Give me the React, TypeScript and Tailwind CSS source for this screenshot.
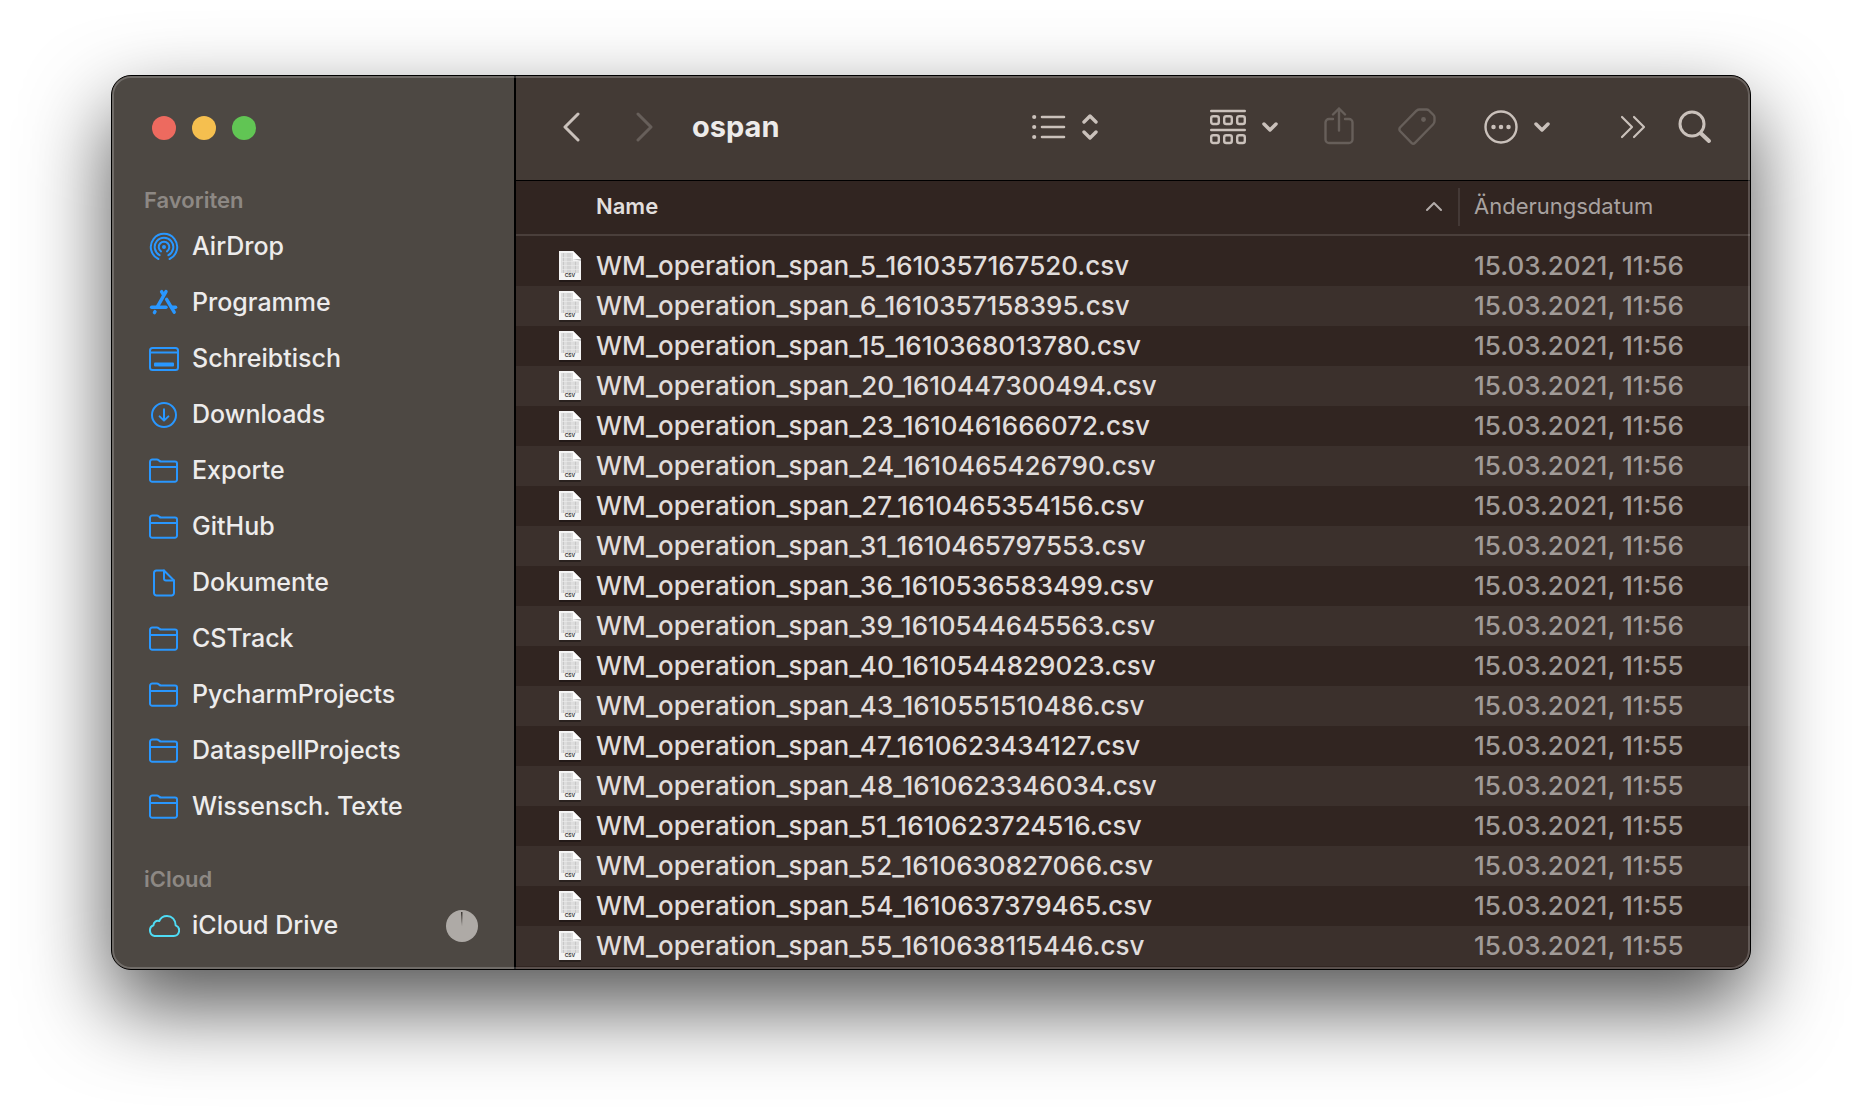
import React from 'react';

const files: [string, string][] = [
  ['WM_operation_span_5_1610357167520.csv', '15.03.2021, 11:56'],
  ['WM_operation_span_6_1610357158395.csv', '15.03.2021, 11:56'],
  ['WM_operation_span_15_1610368013780.csv', '15.03.2021, 11:56'],
  ['WM_operation_span_20_1610447300494.csv', '15.03.2021, 11:56'],
  ['WM_operation_span_23_1610461666072.csv', '15.03.2021, 11:56'],
  ['WM_operation_span_24_1610465426790.csv', '15.03.2021, 11:56'],
  ['WM_operation_span_27_1610465354156.csv', '15.03.2021, 11:56'],
  ['WM_operation_span_31_1610465797553.csv', '15.03.2021, 11:56'],
  ['WM_operation_span_36_1610536583499.csv', '15.03.2021, 11:56'],
  ['WM_operation_span_39_1610544645563.csv', '15.03.2021, 11:56'],
  ['WM_operation_span_40_1610544829023.csv', '15.03.2021, 11:55'],
  ['WM_operation_span_43_1610551510486.csv', '15.03.2021, 11:55'],
  ['WM_operation_span_47_1610623434127.csv', '15.03.2021, 11:55'],
  ['WM_operation_span_48_1610623346034.csv', '15.03.2021, 11:55'],
  ['WM_operation_span_51_1610623724516.csv', '15.03.2021, 11:55'],
  ['WM_operation_span_52_1610630827066.csv', '15.03.2021, 11:55'],
  ['WM_operation_span_54_1610637379465.csv', '15.03.2021, 11:55'],
  ['WM_operation_span_55_1610638115446.csv', '15.03.2021, 11:55'],
];

type SvgProps = { w: number; h: number; stroke?: number; children: React.ReactNode };

function Svg({ w, h, stroke = 2, children }: SvgProps) {
  return (
    <svg
      width={w}
      height={h}
      viewBox={`0 0 ${w} ${h}`}
      fill="none"
      stroke="currentColor"
      strokeWidth={stroke}
      strokeLinecap="round"
      strokeLinejoin="round"
      aria-hidden="true"
      className="shrink-0"
    >
      {children}
    </svg>
  );
}

const AirDropIcon = () => (
  <Svg w={32} h={32}>
    <circle cx="16" cy="16" r="2" fill="currentColor" stroke="none" />
    <path d="M13 20.4a5.300 5.300 0 1 1 6 0" />
    <path d="M11.600 24.200a9.300 9.300 0 1 1 8.800 0" />
    <path d="M10.400 28a13.200 13.200 0 1 1 11.200 0" />
  </Svg>
);

const AppsIcon = () => (
  <Svg w={32} h={32} stroke={3.4}>
    <path d="M18 4.600 9.600 19.400" />
    <path d="M13.600 4.600 15.400 7.600" />
    <path d="M18.600 12.400 26.200 25.200" />
    <path d="M3.600 20.200H18" />
    <path d="M23.600 20.200H27.600" />
    <path d="M7 24.600 6.400 25.600" />
  </Svg>
);

const DesktopIcon = () => (
  <Svg w={32} h={32}>
    <rect x="2" y="5" width="28" height="22" rx="2.5" />
    <path d="M2 9.600h28" />
    <rect x="6" y="19.5" width="20" height="4" rx="1" fill="currentColor" stroke="none" />
  </Svg>
);

const DownloadIcon = () => (
  <Svg w={32} h={32}>
    <circle cx="16" cy="16" r="12" />
    <path d="M16 10.200v11.200M11.600 17.400 16 21.600l4.400-4.200" />
  </Svg>
);

const FolderIcon = () => (
  <Svg w={32} h={32}>
    <path d="M2 24.600V7a2.400 2.400 0 0 1 2.400-2.400h4.400c1 0 1.500.3 2.200.9s1.200 1.100 2.200 1.100H27a2 2 0 0 1 2 2v16a2.200 2.200 0 0 1-2.200 2.200H4.200A2.200 2.200 0 0 1 2 24.600z" />
    <path d="M2 12h27" />
  </Svg>
);

const DocumentIcon = () => (
  <Svg w={32} h={32}>
    <path d="M6 26V6a2.500 2.500 0 0 1 2.500-2.500h7.500L26 13.500V26a2.500 2.500 0 0 1-2.500 2.500h-15A2.500 2.500 0 0 1 6 26z" />
    <path d="M16 3.500v8a2 2 0 0 0 2 2h8" />
  </Svg>
);

const CloudIcon = () => (
  <Svg w={32} h={32}>
    <path d="M6.500 26h19a5.500 5.500 0 0 0 2.200-10.600c0-5.400-3.700-9.400-8.700-9.400-3.500 0-6.500 2-7.800 5-3.200-.8-5.600 1.200-5.700 4.300A5.600 5.600 0 0 0 6.500 26z" />
  </Svg>
);

const ChevronDown = () => (
  <Svg w={16} h={12} stroke={3.5}>
    <path d="M2 3 8 9l6-6" />
  </Svg>
);

const CsvIcon = () => (
  <svg width="24" height="32" viewBox="0 0 24 32" aria-hidden="true" className="block shrink-0">
    <rect x="1" y="30" width="22" height="2" rx="1" fill="#000" opacity=".3" />
    <path d="M1 1h14l8 8v21H1z" fill="#f4f4f4" />
    <path d="M3 3h12v20H3z" fill="#dedede" />
    <path d="M15 11h6v12h-6z" fill="#dcdcdc" />
    <path d="M5.500 3v20M10 3v20M12 3v20M17.500 11v12" stroke="#c8c8c8" />
    <path d="M4 7.500h10M4 11.500h17M4 15.500h17M4 19.500h17" stroke="#ececec" strokeWidth=".6" />
    <path d="M15 1v8h8z" fill="#fff" />
    <path d="M15 9h8v2z" fill="#bdbdbd" />
    <text x="12" y="27" textAnchor="middle" fontSize="5" fontWeight="700" fontFamily="Inter, sans-serif" fill="#444">
      CSV
    </text>
  </svg>
);

const favourites: { label: string; icon: () => React.JSX.Element }[] = [
  { label: 'AirDrop', icon: AirDropIcon },
  { label: 'Programme', icon: AppsIcon },
  { label: 'Schreibtisch', icon: DesktopIcon },
  { label: 'Downloads', icon: DownloadIcon },
  { label: 'Exporte', icon: FolderIcon },
  { label: 'GitHub', icon: FolderIcon },
  { label: 'Dokumente', icon: DocumentIcon },
  { label: 'CSTrack', icon: FolderIcon },
  { label: 'PycharmProjects', icon: FolderIcon },
  { label: 'DataspellProjects', icon: FolderIcon },
  { label: 'Wissensch. Texte', icon: FolderIcon },
];

function Sidebar() {
  return (
    <aside className="w-[404px] shrink-0 border-r-2 border-black bg-[#4d4843] pl-8">
      <div className="flex gap-4 pt-10 pl-2">
        <button aria-label="Schließen" className="size-6 rounded-full bg-[#ed6a5f]" />
        <button aria-label="Minimieren" className="size-6 rounded-full bg-[#f5bf4f]" />
        <button aria-label="Vergrößern" className="size-6 rounded-full bg-[#61c554]" />
      </div>
      <nav>
        <h2 className="mt-11 text-[22px] leading-8 font-semibold text-[#8d8884]">Favoriten</h2>
        <ul className="mt-[3px]">
          {favourites.map(({ label, icon: Icon }) => (
            <li key={label}>
              <a href="#" className="flex h-14 items-center gap-3 pl-1 text-[25px] font-medium text-[#edecec]">
                <span className="text-[#2997ff]">
                  <Icon />
                </span>
                {label}
              </a>
            </li>
          ))}
        </ul>
        <h2 className="mt-7 text-[22px] leading-8 font-semibold text-[#8d8884]">iCloud</h2>
        <a href="#" className="mt-[3px] flex h-14 items-center gap-3 pr-9 pl-1 text-[25px] font-medium text-[#edecec]">
          <span className="text-[#4fdcf5]">
            <CloudIcon />
          </span>
          <span className="flex-1">iCloud Drive</span>
          <svg width="32" height="32" viewBox="0 0 32 32" aria-hidden="true">
            <circle cx="16" cy="16" r="16" fill="#aeaaa6" />
            <path d="M16 16 15 2h1.500z" fill="#3a3632" />
          </svg>
        </a>
      </nav>
    </aside>
  );
}

function Toolbar() {
  return (
    <header className="flex h-[105px] items-center border-b border-black bg-[#433a35] pr-[38px] pb-0.5 pl-[46px] text-[#cac1bb]">
      <button aria-label="Zurück">
        <Svg w={18} h={32} stroke={3}>
          <path d="M16 3 3 16l13 13" />
        </Svg>
      </button>
      <button aria-label="Vorwärts" className="ml-14 text-[#675f5a]" disabled>
        <Svg w={18} h={32} stroke={3}>
          <path d="M2 3 15 16 2 29" />
        </Svg>
      </button>
      <h1 className="ml-[38px] flex-1 text-[29px] font-bold text-[#edebea]">ospan</h1>
      <button aria-label="Listendarstellung" className="flex items-center gap-4">
        <Svg w={34} h={26} stroke={2.6}>
          <path d="M10 3h22M10 13h22M10 23h22" />
          <path d="M2.200 3h.01M2.200 13h.01M2.200 23h.01" strokeWidth="4.200" />
        </Svg>
        <Svg w={16} h={28} stroke={3.4}>
          <path d="M2 9 8 3l6 6M2 19l6 6 6-6" />
        </Svg>
      </button>
      <button aria-label="Gruppieren" className="ml-28 flex items-center gap-4">
        <Svg w={36} h={36} stroke={2.4}>
          <path d="M1.200 2h33.600M1.200 21h33.600" />
          <rect x="1.200" y="7.200" width="7.600" height="7.800" rx="2" />
          <rect x="14.200" y="7.200" width="7.600" height="7.800" rx="2" />
          <rect x="27.200" y="7.200" width="7.600" height="7.800" rx="2" />
          <rect x="1.200" y="26.200" width="7.600" height="7.800" rx="2" />
          <rect x="14.200" y="26.200" width="7.600" height="7.800" rx="2" />
          <rect x="27.200" y="26.200" width="7.600" height="7.800" rx="2" />
        </Svg>
        <ChevronDown />
      </button>
      <button aria-label="Teilen" className="ml-[46px] text-[#675f5a]" disabled>
        <Svg w={30} h={40} stroke={2.4}>
          <path d="M9 12H5a3.500 3.500 0 0 0-3.500 3.500v17A3.500 3.500 0 0 0 5 36h20a3.500 3.500 0 0 0 3.500-3.500v-17A3.500 3.500 0 0 0 25 12h-4" />
          <path d="M15 23.500V1.500M9 7.500l6-6 6 6" />
        </Svg>
      </button>
      <button aria-label="Tags" className="ml-11 text-[#675f5a]" disabled>
        <Svg w={38} h={38} stroke={2.4}>
          <path d="M21.500 1.500h7q1.500 0 2.500 1L35.500 7q1 1 1 2.500V13q0 2-1.500 3.500L17 34.800q-1.700 1.700-3.500 0L2 23q-1.200-1.700 0-3.500L18.500 2.700q1.500-1.200 3-1.200z" />
          <circle cx="25.500" cy="11.500" r="2.400" fill="currentColor" stroke="none" />
        </Svg>
      </button>
      <button aria-label="Aktionen" className="ml-12 flex items-center gap-4">
        <Svg w={34} h={34} stroke={2.4}>
          <circle cx="17" cy="17" r="15.500" />
          <path d="M9.500 17h.01M17 17h.01M24.500 17h.01" strokeWidth="4.500" />
        </Svg>
        <ChevronDown />
      </button>
      <button aria-label="Mehr" className="ml-[70px]">
        <Svg w={26} h={24} stroke={2.2}>
          <path d="M2 2 12 12 2 22M14 2l10 10-10 10" />
        </Svg>
      </button>
      <button aria-label="Suchen" className="ml-8">
        <Svg w={34} h={34} stroke={3}>
          <circle cx="14" cy="14" r="12" />
          <path d="M23 23.500 31 31" strokeWidth="4" />
        </Svg>
      </button>
    </header>
  );
}

function FileTable() {
  return (
    <table className="w-full table-fixed border-collapse bg-[#312521] text-left">
      <colgroup>
        <col />
        <col className="w-[290px]" />
      </colgroup>
      <thead>
        <tr className="h-[54px] border-b-2 border-[#4a3f3b] text-[22px]">
          <th className="p-0 pb-0.5 font-semibold text-[#e2dfdd]">
            <button className="flex h-[38px] w-full items-center justify-between border-r-2 border-[#443936] pr-4 pl-20">
              Name
              <span className="text-[#b3acaa]">
                <Svg w={16} h={12}>
                  <path d="M1 9 8 2l7 7" />
                </Svg>
              </span>
            </button>
          </th>
          <th className="p-0 pb-0.5 font-normal text-[#a8a2a0]">
            <button className="pl-[14px]">Änderungsdatum</button>
          </th>
        </tr>
      </thead>
      <tbody>
        <tr aria-hidden="true" className="h-[11px]">
          <td colSpan={2} className="p-0" />
        </tr>
        {files.map(([name, date]) => (
          <tr key={name} className="h-10 text-[26px] leading-10 font-medium whitespace-nowrap odd:bg-[#3b302c]">
            <td className="p-0 text-[#e0dddc]">
              <div className="flex items-center gap-[14px] pl-[42px]">
                <CsvIcon />
                {name}
              </div>
            </td>
            <td className="p-0 pl-[14px] text-[#a19b98]">{date}</td>
          </tr>
        ))}
      </tbody>
    </table>
  );
}

export default function App() {
  return (
    <div className="min-h-screen bg-white px-[111px] pt-[75px] pb-36 font-['Inter',sans-serif]">
      <main className="relative flex overflow-hidden rounded-[20px] border border-black bg-[#312521] shadow-[0_36px_84px_rgba(0,0,0,0.68)]">
        <Sidebar />
        <div className="min-w-0 flex-1 pb-[3px]">
          <Toolbar />
          <FileTable />
        </div>
        <div className="pointer-events-none absolute inset-0 rounded-[19px] border-2 border-white/20" />
      </main>
    </div>
  );
}
